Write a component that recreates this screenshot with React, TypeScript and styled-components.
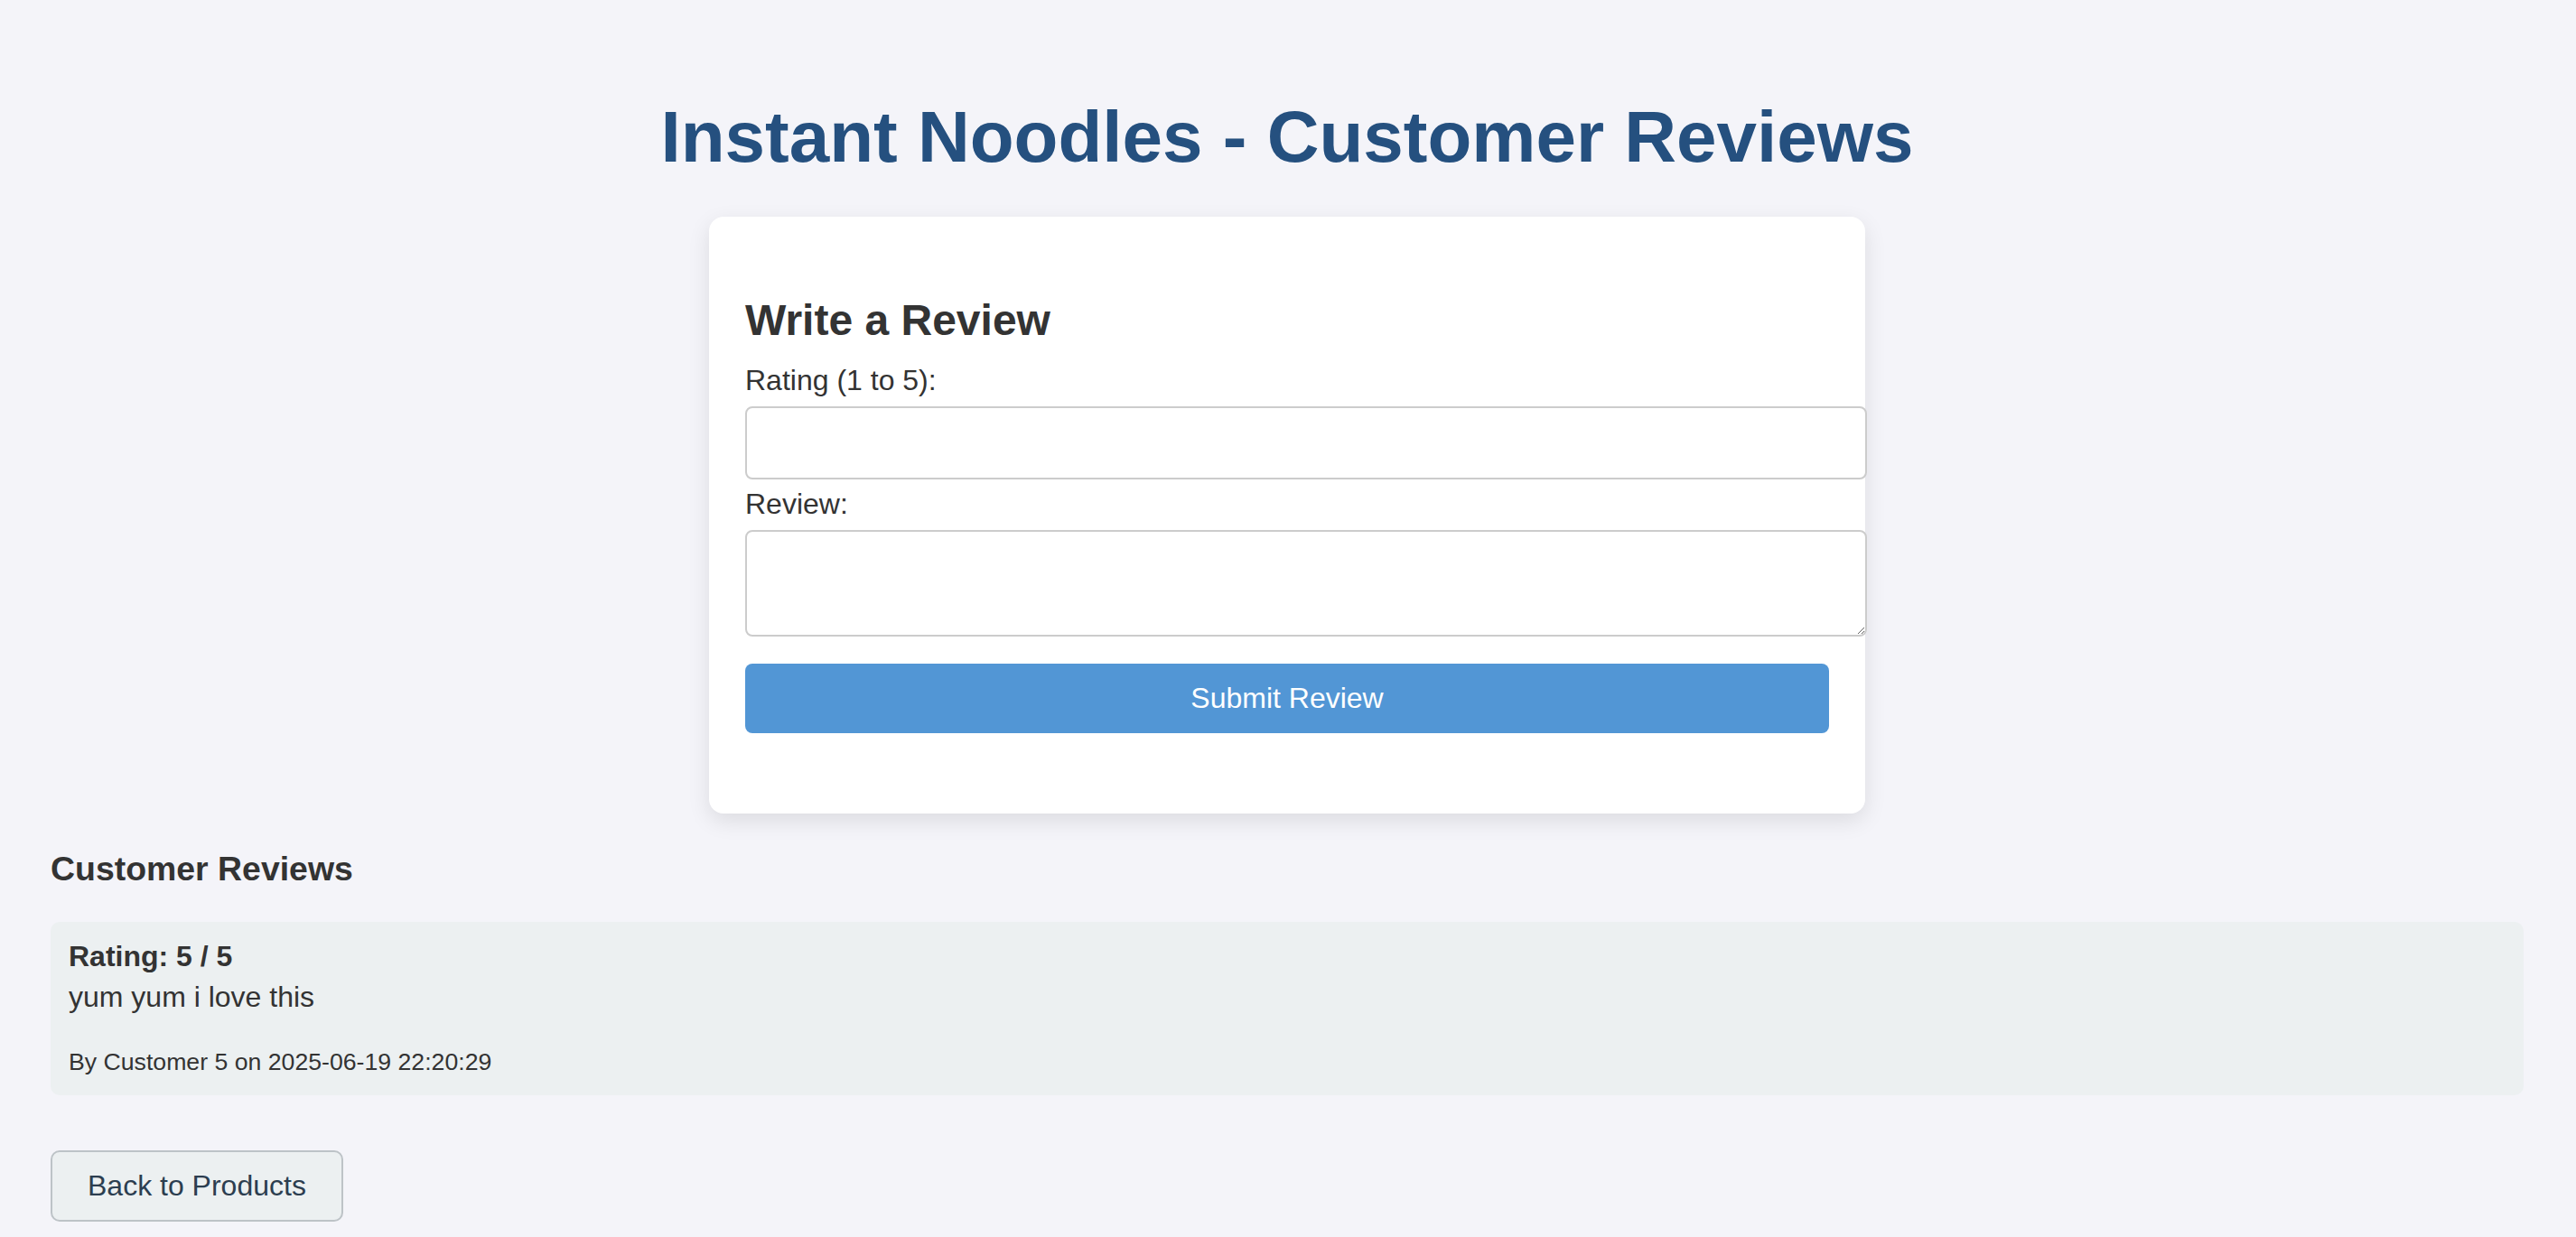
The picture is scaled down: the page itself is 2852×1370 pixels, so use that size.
import styled, { createGlobalStyle } from 'styled-components';

const GlobalStyle = createGlobalStyle`
  body {
    margin: 0;
    background: #f4f4f9;
    font-family: "Liberation Sans", Arial, sans-serif;
    color: #333;
  }
`;

const Page = styled.div`
  padding: 56px 58px 0 56px;
`;

const Title = styled.h1`
  margin: 50px 0 42px;
  font-size: 80px;
  font-weight: bold;
  text-align: center;
  color: #25507f;
`;

const FormCard = styled.div`
  width: 1200px;
  margin: 0 auto;
  padding: 40px;
  background: #fff;
  border-radius: 16px;
  box-shadow: 0 8px 24px rgba(0, 0, 0, 0.1);
`;

const FormTitle = styled.h2`
  margin: 47px 0 21px;
  font-size: 48px;
  font-weight: bold;
  color: #333;
`;

const Label = styled.label<{ $gap?: number }>`
  display: block;
  margin-top: ${({ $gap }) => $gap ?? 0}px;
  font-size: 32px;
  color: #333;
`;

const fieldStyles = `
  display: block;
  width: 100%;
  margin-top: 10px;
  padding: 20px 19px;
  border: 2px solid #ccc;
  border-radius: 8px;
  background: #fff;
  font-family: "Liberation Sans", Arial, sans-serif;
  font-size: 32px;
  color: #333;
`;

const Input = styled.input`
  ${fieldStyles}
`;

const TextArea = styled.textarea`
  ${fieldStyles}
`;

const SubmitButton = styled.button`
  display: block;
  box-sizing: border-box;
  width: 100%;
  margin: 30px 0 49px;
  padding: 20px;
  border: none;
  border-radius: 8px;
  background: #5296d5;
  color: #fff;
  font-family: "Liberation Sans", Arial, sans-serif;
  font-size: 32px;
  cursor: pointer;
`;

const SectionTitle = styled.h3`
  margin: 40px 0 37px;
  font-size: 37.44px;
  font-weight: bold;
  color: #333;
`;

const ReviewCard = styled.div`
  padding: 20px 20px 21px;
  background: #ecf0f1;
  border-radius: 10px;
`;

const ReviewRating = styled.div`
  font-size: 32px;
  font-weight: bold;
`;

const ReviewText = styled.p`
  margin: 8px 0 38px;
  font-size: 32px;
`;

const ReviewMeta = styled.small`
  display: block;
  font-size: 26.67px;
  color: #333;
`;

const BackButton = styled.button`
  margin-top: 61px;
  padding: 19px 39px;
  border: 2px solid #bdc3c7;
  border-radius: 10px;
  background: #ecf0f1;
  color: #2c3e50;
  font-family: "Liberation Sans", Arial, sans-serif;
  font-size: 32px;
  cursor: pointer;
`;

interface Review {
  id: number;
  rating: number;
  text: string;
  author: string;
  date: string;
}

const reviews: Review[] = [
  { id: 1, rating: 5, text: 'yum yum i love this', author: 'Customer 5', date: '2025-06-19 22:20:29' },
];

export default function App() {
  return (
    <>
      <GlobalStyle />
      <Page>
        <Title>Instant Noodles - Customer Reviews</Title>
        <FormCard>
          <form onSubmit={(e) => e.preventDefault()}>
            <FormTitle>Write a Review</FormTitle>
            <Label htmlFor="rating">Rating (1 to 5):</Label>
            <Input id="rating" type="number" min={1} max={5} />
            <Label htmlFor="review" $gap={9}>
              Review:
            </Label>
            <TextArea id="review" rows={2} />
            <SubmitButton type="submit">Submit Review</SubmitButton>
          </form>
        </FormCard>

        <SectionTitle>Customer Reviews</SectionTitle>
        {reviews.map((review) => (
          <ReviewCard key={review.id}>
            <ReviewRating>
              Rating: {review.rating} / 5
            </ReviewRating>
            <ReviewText>{review.text}</ReviewText>
            <ReviewMeta>
              By {review.author} on {review.date}
            </ReviewMeta>
          </ReviewCard>
        ))}

        <BackButton type="button">Back to Products</BackButton>
      </Page>
    </>
  );
}
